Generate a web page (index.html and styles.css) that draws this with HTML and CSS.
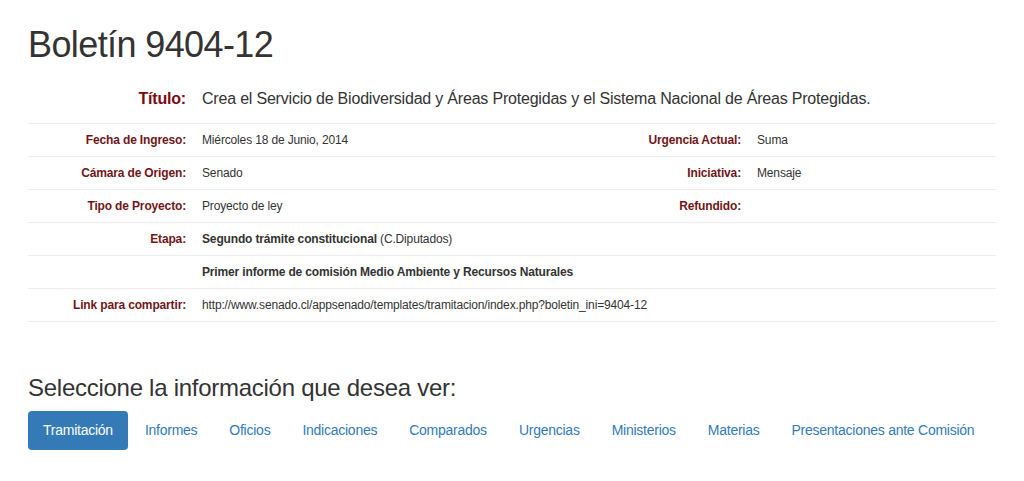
FILE: index.html
```html
<!DOCTYPE html>
<html lang="es">
<head>
    <meta charset="UTF-8">
    <meta name="viewport" content="width=device-width, initial-scale=1.0">
    <title>Boletín 9404-12</title>
    <link rel="stylesheet" href="styles.css">
</head>
<body>
    <div class="container">
        <h1 class="boletin-title">Boletín 9404-12</h1>

        <table class="ficha">
            <colgroup>
                <col class="col-label">
                <col class="col-value">
                <col class="col-label">
                <col class="col-value-right">
            </colgroup>
            <tr class="titulo-row">
                <th>Título:</th>
                <td colspan="3">Crea el Servicio de Biodiversidad y Áreas Protegidas y el Sistema Nacional de Áreas Protegidas.</td>
            </tr>
            <tr>
                <th>Fecha de Ingreso:</th>
                <td>Miércoles 18 de Junio, 2014</td>
                <th>Urgencia Actual:</th>
                <td>Suma</td>
            </tr>
            <tr>
                <th>Cámara de Origen:</th>
                <td>Senado</td>
                <th>Iniciativa:</th>
                <td>Mensaje</td>
            </tr>
            <tr>
                <th>Tipo de Proyecto:</th>
                <td>Proyecto de ley</td>
                <th>Refundido:</th>
                <td></td>
            </tr>
            <tr>
                <th>Etapa:</th>
                <td colspan="3"><strong>Segundo trámite constitucional</strong> (C.Diputados)</td>
            </tr>
            <tr>
                <th></th>
                <td colspan="3"><strong>Primer informe de comisión Medio Ambiente y Recursos Naturales</strong></td>
            </tr>
            <tr>
                <th>Link para compartir:</th>
                <td colspan="3">http://www.senado.cl/appsenado/templates/tramitacion/index.php?boletin_ini=9404-12</td>
            </tr>
        </table>

        <h2 class="seleccione">Seleccione la información que desea ver:</h2>

        <ul class="nav-pills">
            <li class="active"><a href="#">Tramitación</a></li>
            <li><a href="#">Informes</a></li>
            <li><a href="#">Oficios</a></li>
            <li><a href="#">Indicaciones</a></li>
            <li><a href="#">Comparados</a></li>
            <li><a href="#">Urgencias</a></li>
            <li><a href="#">Ministerios</a></li>
            <li><a href="#">Materias</a></li>
            <li><a href="#">Presentaciones ante Comisión</a></li>
        </ul>
    </div>
</body>
</html>
```

FILE: styles.css
```css
body {
    margin: 0;
    padding: 0;
    background-color: #ffffff;
    font-family: "Liberation Sans", Arial, sans-serif;
    font-size: 14px;
    color: #333333;
}

.container {
    padding: 0 28px;
}

.boletin-title {
    font-size: 36px;
    font-weight: normal;
    line-height: 1.1;
    letter-spacing: -0.6px;
    margin: 25px 0 0;
    color: #333333;
}

.ficha {
    width: 968px;
    border-collapse: collapse;
    font-size: 12px;
    letter-spacing: -0.15px;
}

.col-label {
    width: 166px;
}

.col-value {
    width: 389px;
}

.col-value-right {
    width: 247px;
}

.ficha th,
.ficha td {
    padding: 8px;
    line-height: 16px;
    vertical-align: top;
    border-top: 1px solid #ececec;
}

.ficha th {
    text-align: right;
    font-weight: bold;
    color: #701618;
}

.ficha td {
    text-align: left;
    color: #333333;
}

.ficha tr:last-child th,
.ficha tr:last-child td {
    border-bottom: 1px solid #ececec;
}

.ficha .titulo-row th,
.ficha .titulo-row td {
    border-top: none;
    font-size: 16px;
    letter-spacing: -0.2px;
    line-height: 21px;
    padding-top: 23px;
    padding-bottom: 14px;
}

.ficha .titulo-row th {
    color: #7a0a0e;
}

.seleccione {
    font-size: 24px;
    font-weight: normal;
    line-height: 1.1;
    letter-spacing: -0.27px;
    margin: 53px 0 10px;
    color: #333333;
}

.nav-pills {
    list-style: none;
    margin: 0;
    padding: 0;
    display: flex;
    white-space: nowrap;
}

.nav-pills li {
    margin-left: 2px;
}

.nav-pills li:first-child {
    margin-left: 0;
}

.nav-pills a {
    display: block;
    padding: 10px 15px;
    line-height: 19px;
    font-size: 14px;
    letter-spacing: -0.25px;
    color: #337ab7;
    text-decoration: none;
    border-radius: 4px;
}

.nav-pills li.active a {
    background-color: #337ab7;
    color: #ffffff;
}
```
